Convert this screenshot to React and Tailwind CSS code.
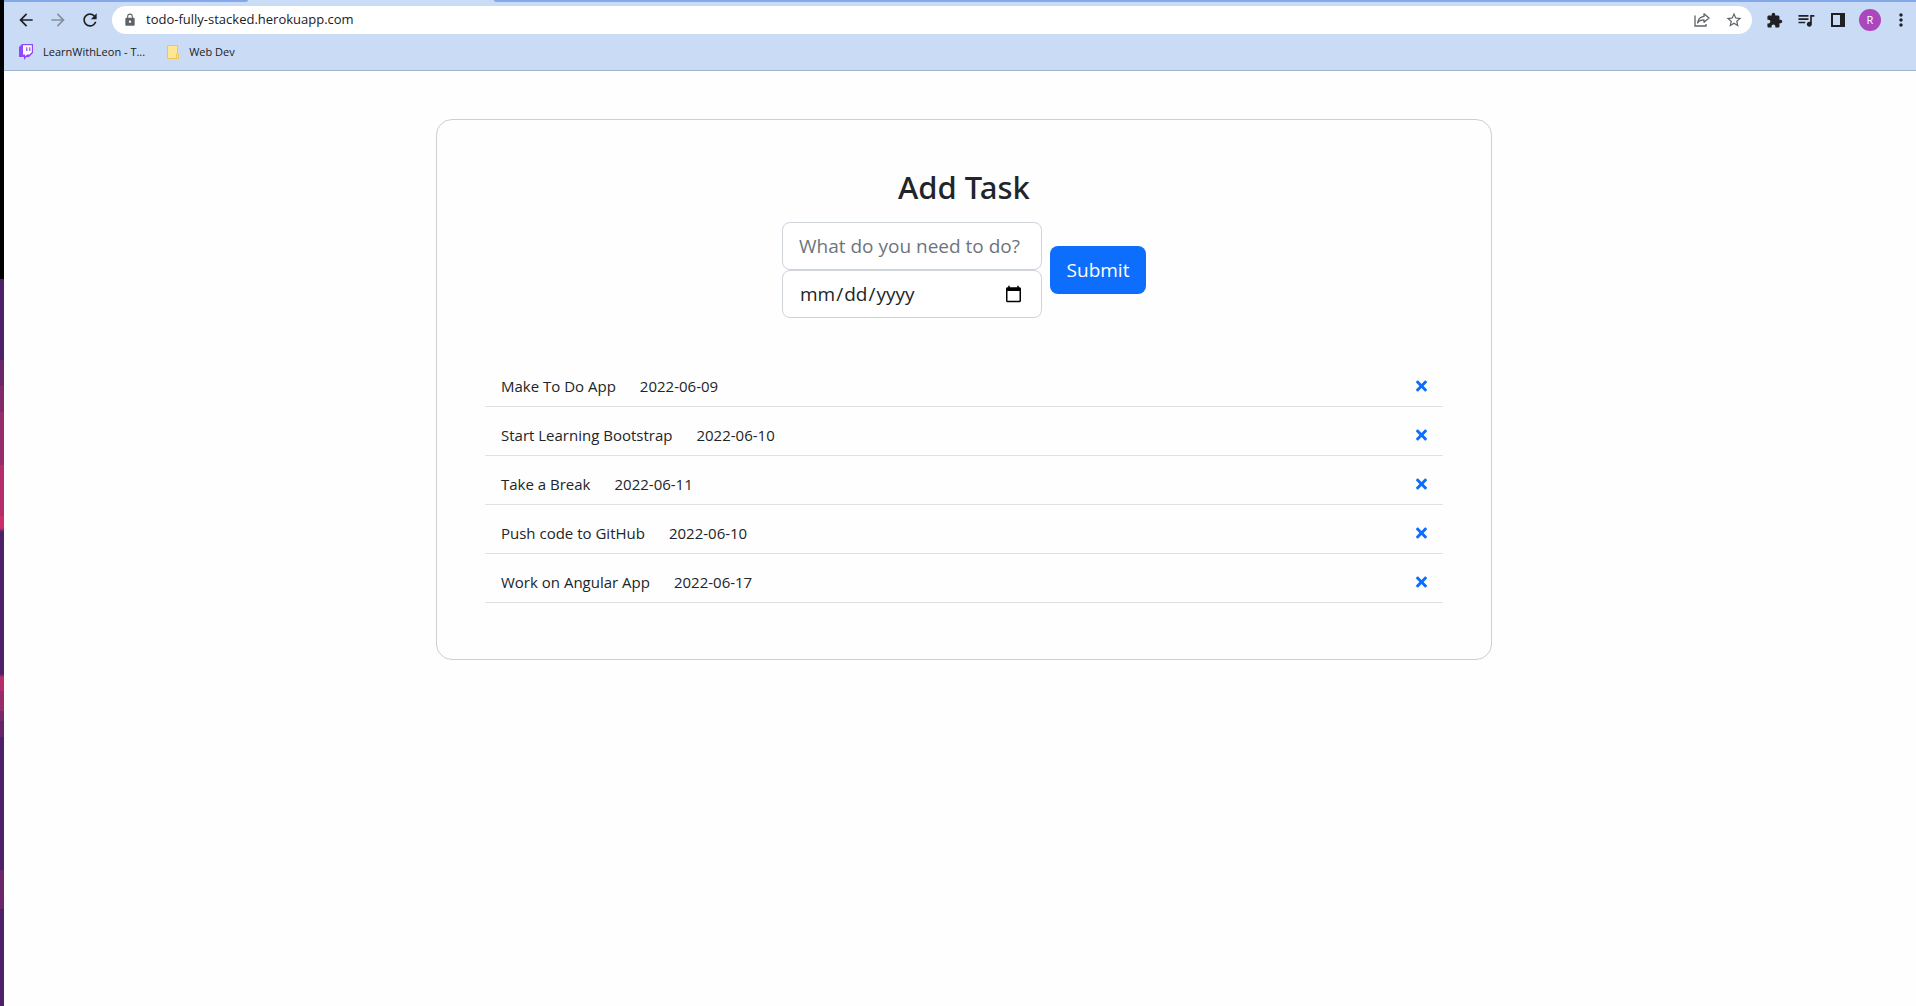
import {
  MdArrowBack,
  MdArrowForward,
  MdExtension,
  MdLock,
  MdMoreVert,
  MdQueueMusic,
  MdRefresh,
  MdStarBorder,
} from "react-icons/md";
import { FaTimes } from "react-icons/fa";

const tasks = [
  { name: "Make To Do App", date: "2022-06-09" },
  { name: "Start Learning Bootstrap", date: "2022-06-10" },
  { name: "Take a Break", date: "2022-06-11" },
  { name: "Push code to GitHub", date: "2022-06-10" },
  { name: "Work on Angular App", date: "2022-06-17" },
];

function IconButton({ label, className = "w-8", children }) {
  return (
    <button type="button" aria-label={label} className={`flex h-7 shrink-0 items-center justify-center ${className}`}>
      {children}
    </button>
  );
}

function ShareIcon() {
  return (
    <svg width="16" height="16" viewBox="0 0 16 16" fill="none" stroke="#5f6368" strokeWidth="1.3" aria-hidden="true">
      <path d="M1 3.5V14H12V12" />
      <path d="M10 1.8L15 6L10 10.2V7.9C7 7.9 5 8.9 3.6 11C4 7.6 6.4 4.9 10 4.4Z" strokeLinejoin="round" />
    </svg>
  );
}

function TwitchIcon() {
  return (
    <svg width="14" height="16" viewBox="0 0 14 16" aria-hidden="true">
      <path d="M3 0H14V9L10 13H7.5L5 16V13H0V3Z" fill="#9146ff" />
      <path d="M4 1.2H12.8V8.2L10.4 10.4H8.2L6.2 12.2V10.4H4Z" fill="#fff" />
      <path d="M7.2 3.2H8.4V7H7.2ZM10.2 3.2H11.4V7H10.2Z" fill="#9146ff" />
    </svg>
  );
}

function FolderIcon() {
  return (
    <svg width="12" height="14" viewBox="0 0 12 14" aria-hidden="true">
      <path d="M0.5 0.5H10.5V9.5H11.5V13.5H0.5Z" fill="#ffe694" stroke="#ecc752" />
      <path d="M9.5 13V9.5H11" fill="none" stroke="#ecc752" />
    </svg>
  );
}

function BrowserBar() {
  return (
    <header className="border-b border-[#a5b3cd] bg-[#c9dbf5] text-[#202124]">
      <div className="flex h-0.5">
        <div className="w-[244px] rounded-br-sm bg-[#83a9ea]" />
        <div className="w-[246px]" />
        <div className="grow rounded-bl-sm bg-[#83a9ea]" />
      </div>
      <div className="flex items-center pt-1 pl-1.5">
        <IconButton label="Back"><MdArrowBack size={20} /></IconButton>
        <IconButton label="Forward"><MdArrowForward size={20} className="text-[#8690a1]" /></IconButton>
        <IconButton label="Reload"><MdRefresh size={20} /></IconButton>
        <div className="mx-1.5 flex h-7 min-w-0 grow items-center rounded-full bg-white pl-[11px] pr-0.5">
          <MdLock size={14} className="mr-[9px] shrink-0 text-[#5f6368]" />
          <input
            type="text"
            aria-label="Address"
            defaultValue="todo-fully-stacked.herokuapp.com"
            className="min-w-0 grow bg-transparent text-[13px] outline-none"
          />
          <IconButton label="Share"><ShareIcon /></IconButton>
          <IconButton label="Bookmark this page"><MdStarBorder size={18} className="text-[#5f6368]" /></IconButton>
        </div>
        <IconButton label="Extensions"><MdExtension size={17} /></IconButton>
        <IconButton label="Media controls"><MdQueueMusic size={20} /></IconButton>
        <IconButton label="Side panel">
          <svg width="14" height="14" viewBox="0 0 14 14" aria-hidden="true">
            <path fillRule="evenodd" d="M0 0H14V14H0ZM2 2V12H9V2Z" fill="#202124" />
          </svg>
        </IconButton>
        <IconButton label="Profile">
          <span className="flex size-[22px] items-center justify-center rounded-full bg-[#ab47bc] text-[11px] text-white">R</span>
        </IconButton>
        <IconButton label="Menu" className="w-[30px]"><MdMoreVert size={20} /></IconButton>
      </div>
      <nav className="flex h-9 items-center gap-[22px] pl-[15px] text-[11px]">
        <a href="#learnwithleon" className="flex items-center gap-2.5"><TwitchIcon />LearnWithLeon - T...</a>
        <a href="#web-dev" className="flex items-center gap-2.5"><FolderIcon />Web Dev</a>
      </nav>
    </header>
  );
}

function TaskForm() {
  const field = "block h-12 w-[260px] rounded-lg border border-[#ced4da] bg-white px-4 text-[19px] outline-none placeholder:text-[#6c757d]";
  return (
    <form className="flex items-center justify-center gap-2" onSubmit={(e) => e.preventDefault()}>
      <div>
        <input type="text" aria-label="Task" placeholder="What do you need to do?" className={field} />
        <input type="date" aria-label="Due date" className={field} />
      </div>
      <button type="submit" className="h-12 w-24 rounded-lg bg-[#0d6efd] text-[19px] text-white">Submit</button>
    </form>
  );
}

export default function App() {
  return (
    <div className="flex min-h-screen bg-[#fefefe] font-['Segoe_UI','Open_Sans',sans-serif] text-[#212529]">
      <div className="w-1 shrink-0 bg-[linear-gradient(#000_279px,#4d2167_279px_360px,#6a2668_360px_386px,#832969_386px_412px,#962c69_412px_465px,#b52d6b_465px_516px,#cc2e6a_516px_528px,#4d2167_532px_674px,#b52d6b_677px_691px,#962c69_691px_711px,#7a2869_711px_721px,#63246a_721px_737px,#4d2167_737px_870px,#6b2769_870px_909px,#4d2167_909px)]" />
      <div className="min-w-0 grow">
        <BrowserBar />
        <main className="pt-12 pl-2">
          <section className="mx-auto w-full max-w-[1056px] rounded-2xl border border-[#cfcfd1] px-12 pt-12 pb-14">
            <h1 className="mb-4 text-center font-['Segoe_UI','Noto_Sans',sans-serif] text-[31px] leading-[38px] font-medium">Add Task</h1>
            <TaskForm />
            <ul className="mt-10">
              {tasks.map((task) => (
                <li key={task.name} className="flex items-center border-b border-[#dee2e6] px-4 pt-4 pb-2 text-[15px] leading-6">
                  <span>{task.name}</span>
                  <span className="ml-6">{task.date}</span>
                  <button type="button" aria-label={`Delete ${task.name}`} className="ml-auto text-[#0d6efd]">
                    <FaTimes size={16} className="w-[11px]" />
                  </button>
                </li>
              ))}
            </ul>
          </section>
        </main>
      </div>
    </div>
  );
}
